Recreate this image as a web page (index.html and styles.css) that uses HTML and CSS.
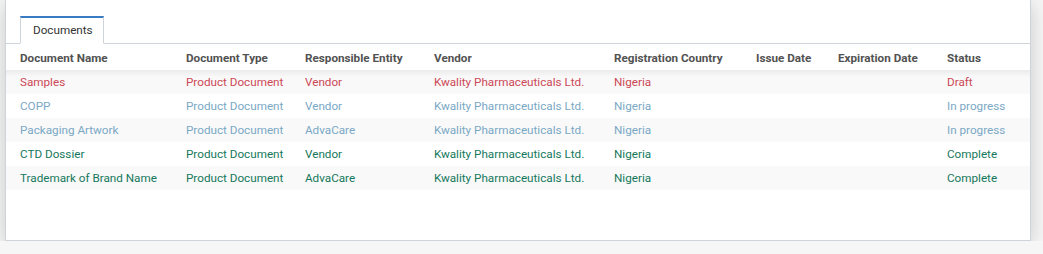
FILE: index.html
```html
<!DOCTYPE html>
<html lang="en">
<head>
  <meta charset="UTF-8">
  <title>Documents</title>
  <link rel="stylesheet" href="styles.css">
</head>
<body>
  <div class="sheet">
    <ul class="tabs">
      <li class="tab active">Documents</li>
    </ul>
    <table class="list">
      <thead>
        <tr>
          <th class="c-name">Document Name</th>
          <th class="c-type">Document Type</th>
          <th class="c-entity">Responsible Entity</th>
          <th class="c-vendor">Vendor</th>
          <th class="c-country">Registration Country</th>
          <th class="c-issue">Issue Date</th>
          <th class="c-exp">Expiration Date</th>
          <th>Status</th>
        </tr>
      </thead>
      <tbody>
        <tr class="draft">
          <td>Samples</td><td>Product Document</td><td>Vendor</td><td>Kwality Pharmaceuticals Ltd.</td><td>Nigeria</td><td></td><td></td><td>Draft</td>
        </tr>
        <tr class="progress">
          <td>COPP</td><td>Product Document</td><td>Vendor</td><td>Kwality Pharmaceuticals Ltd.</td><td>Nigeria</td><td></td><td></td><td>In progress</td>
        </tr>
        <tr class="progress">
          <td>Packaging Artwork</td><td>Product Document</td><td>AdvaCare</td><td>Kwality Pharmaceuticals Ltd.</td><td>Nigeria</td><td></td><td></td><td>In progress</td>
        </tr>
        <tr class="complete">
          <td>CTD Dossier</td><td>Product Document</td><td>Vendor</td><td>Kwality Pharmaceuticals Ltd.</td><td>Nigeria</td><td></td><td></td><td>Complete</td>
        </tr>
        <tr class="complete">
          <td>Trademark of Brand Name</td><td>Product Document</td><td>AdvaCare</td><td>Kwality Pharmaceuticals Ltd.</td><td>Nigeria</td><td></td><td></td><td>Complete</td>
        </tr>
      </tbody>
    </table>
  </div>
</body>
</html>
```

FILE: styles.css
```css
body {
  margin: 0;
  background-color: #f6f6f6;
  font-family: Roboto, 'Liberation Sans', sans-serif;
  font-size: 11.7px;
  color: #333;
}
.sheet {
  margin: -2px 12px 0 5px;
  height: 243px;
  box-sizing: border-box;
  background-color: #fff;
  border: 1px solid #ced4da;
  border-top: none;
  box-shadow: 0 5px 20px -1px rgba(0,0,0,0.2);
  padding-top: 18px;
}
.tabs {
  list-style: none;
  margin: 0;
  padding: 0 0 0 14px;
  border-bottom: 1px solid #ced4da;
  display: flex;
}
.tab {
  height: 28px;
  line-height: 25px;
  padding: 0 10px 0 12px;
  margin-bottom: -1px;
  color: #333;
  background-color: #fff;
  border: 1px solid #ced4da;
  border-top: 2px solid #3a7cc4;
  border-bottom-color: #fff;
  box-sizing: border-box;
}
.list {
  width: 100%;
  border-collapse: collapse;
  table-layout: fixed;
}
.list th,
.list td {
  text-align: left;
  padding: 0 0 0 3px;
  white-space: nowrap;
  height: 24px;
}
.list th:first-child,
.list td:first-child {
  padding-left: 14px;
}
.list thead th {
  height: 25px;
  padding-top: 1px;
  font-weight: bold;
  color: #525252;
}
.c-name { width: 163px; }
.c-type { width: 116px; }
.c-entity { width: 126px; }
.c-vendor { width: 177px; }
.c-country { width: 139px; }
.c-issue { width: 79px; }
.c-exp { width: 106px; }
.list tbody tr:nth-child(odd) {
  background-color: #f9f9f9;
}
.list tbody tr:first-child {
  background: linear-gradient(#ebebeb, #f9f9f9 7px);
}
.draft { color: #cc4857; }
.progress { color: #7aa8c5; }
.complete { color: #15785c; }
```
